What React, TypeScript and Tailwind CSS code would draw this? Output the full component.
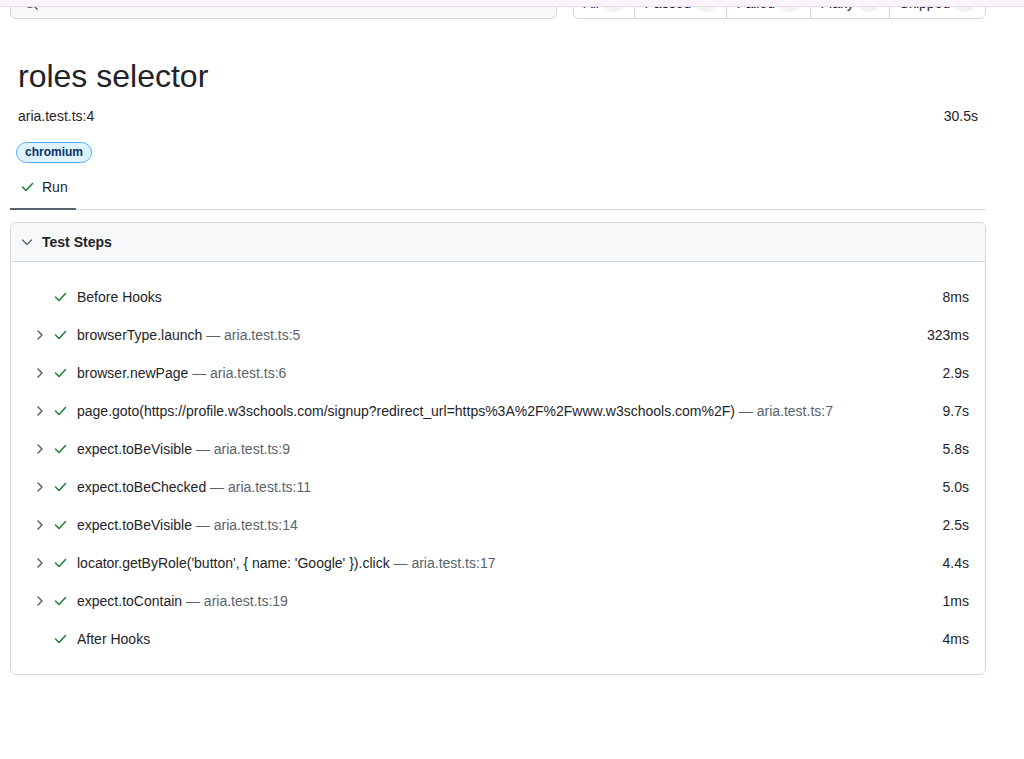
import React from 'react'

const font = { fontFamily: '"Liberation Sans", Arial, sans-serif' }

function CheckIcon({ className = '' }: { className?: string }) {
  return (
    <svg viewBox="0 0 16 16" width="16" height="16" className={className} fill="none" stroke="currentColor" strokeWidth="1.5" strokeLinecap="round" strokeLinejoin="round">
      <polyline points="4.5,8 8,11.5 14.5,4.5" />
    </svg>
  )
}

function ChevronRight() {
  return (
    <svg viewBox="0 0 16 16" width="16" height="16" className="text-[#59636e]" fill="none" stroke="currentColor" strokeWidth="1.5" strokeLinecap="round" strokeLinejoin="round">
      <polyline points="6,4 10,8 6,12" />
    </svg>
  )
}

function ChevronDown() {
  return (
    <svg viewBox="0 0 16 16" width="16" height="16" className="text-[#59636e]" fill="none" stroke="currentColor" strokeWidth="1.3" strokeLinecap="round" strokeLinejoin="round">
      <polyline points="3.5,6 8,10.5 12.5,6" />
    </svg>
  )
}

const steps = [
  { title: 'Before Hooks', loc: '', time: '8ms', expandable: false },
  { title: 'browserType.launch', loc: 'aria.test.ts:5', time: '323ms', expandable: true },
  { title: 'browser.newPage', loc: 'aria.test.ts:6', time: '2.9s', expandable: true },
  {
    title: 'page.goto(https://profile.w3schools.com/signup?redirect_url=https%3A%2F%2Fwww.w3schools.com%2F)',
    loc: 'aria.test.ts:7',
    time: '9.7s',
    expandable: true,
  },
  { title: 'expect.toBeVisible', loc: 'aria.test.ts:9', time: '5.8s', expandable: true },
  { title: 'expect.toBeChecked', loc: 'aria.test.ts:11', time: '5.0s', expandable: true },
  { title: 'expect.toBeVisible', loc: 'aria.test.ts:14', time: '2.5s', expandable: true },
  { title: "locator.getByRole('button', { name: 'Google' }).click", loc: 'aria.test.ts:17', time: '4.4s', expandable: true },
  { title: 'expect.toContain', loc: 'aria.test.ts:19', time: '1ms', expandable: true },
  { title: 'After Hooks', loc: '', time: '4ms', expandable: false },
]

const filters = [
  { label: 'All', count: 1 },
  { label: 'Passed', count: 1 },
  { label: 'Failed', count: 0 },
  { label: 'Flaky', count: 0 },
  { label: 'Skipped', count: 0 },
]

export default function App() {
  return (
    <div className="relative min-h-[759px] bg-white text-[#1f2328] overflow-hidden" style={font}>
      {/* top band lying over the scrolled header */}
      <div className="absolute top-0 left-0 right-0 h-[7px] bg-[#fcf4fc] border-b border-[#e8dce8] z-10" />

      <div className="w-[976px] ml-[10px] -mt-[13px]">
        {/* search + filters */}
        <div className="flex items-center gap-4">
          <div className="flex-1 h-[32px] flex items-center px-3 bg-[#f6f8fa] border border-[#d1d9e0] rounded-md text-[#59636e]">
            <svg viewBox="0 0 16 16" width="16" height="16" fill="currentColor">
              <path d="M10.68 11.74a6 6 0 0 1-7.922-8.982 6 6 0 0 1 8.982 7.922l3.04 3.04a.749.749 0 0 1-.326 1.275.749.749 0 0 1-.734-.215ZM11.5 7a4.499 4.499 0 1 0-8.997 0A4.499 4.499 0 0 0 11.5 7Z" />
            </svg>
          </div>
          <div className="h-[32px] flex border border-[#d1d9e0] rounded-md text-sm">
            {filters.map((f, i) => (
              <div
                key={f.label}
                className={`flex items-center gap-[5px] px-[9.8px] ${i > 0 ? 'border-l border-[#d1d9e0]' : ''}`}
              >
                {f.label}
                <span className="min-w-[20px] text-center rounded-full bg-[#eff2f5] text-xs leading-[18px]">{f.count}</span>
              </div>
            ))}
          </div>
        </div>

        {/* test header */}
        <div className="px-2">
          <h1 className="mt-[37px] text-[32px] leading-[40px] font-normal">roles selector</h1>
          <div className="mt-[10px] flex justify-between text-sm leading-5">
            <span>aria.test.ts:4</span>
            <span>30.5s</span>
          </div>
        </div>
        <div className="mt-[13px] ml-[6px]">
          <span className="inline-block px-[8px] rounded-full border border-[#54aeff] bg-[#ddf4ff] text-[#0a3069] text-xs font-bold leading-[19px]">
            chromium
          </span>
        </div>

        {/* tabs */}
        <div className="mt-[3px] flex border-b border-[#d1d9e0]">
          <div className="flex items-center gap-2 px-2 pt-[11px] pb-[11px] border-b-2 border-[#59636e] -mb-px text-sm leading-5">
            <CheckIcon className="text-[#1a7f37]" />
            <span>Run</span>
          </div>
        </div>

        {/* steps card */}
        <div className="mt-[12px] border border-[#d1d9e0] rounded-md overflow-hidden">
          <div className="h-[39px] flex items-center gap-[7px] pl-[8px] bg-[#f6f8fa] border-b border-[#d1d9e0]">
            <ChevronDown />
            <span className="text-sm font-bold">Test Steps</span>
          </div>
          <div className="py-4">
            {steps.map((s, i) => (
              <div key={i} className="h-[38px] flex items-center pl-[21px] pr-4 text-sm">
                <div className="w-4 h-4 flex-none">{s.expandable && <ChevronRight />}</div>
                <CheckIcon className="ml-[3px] flex-none text-[#1a7f37]" />
                <span className="ml-[10px] flex-1 whitespace-nowrap">
                  {s.title}
                  {s.loc && <span className="text-[#59636e]"> — {s.loc}</span>}
                </span>
                <span>{s.time}</span>
              </div>
            ))}
          </div>
        </div>
      </div>
    </div>
  )
}
